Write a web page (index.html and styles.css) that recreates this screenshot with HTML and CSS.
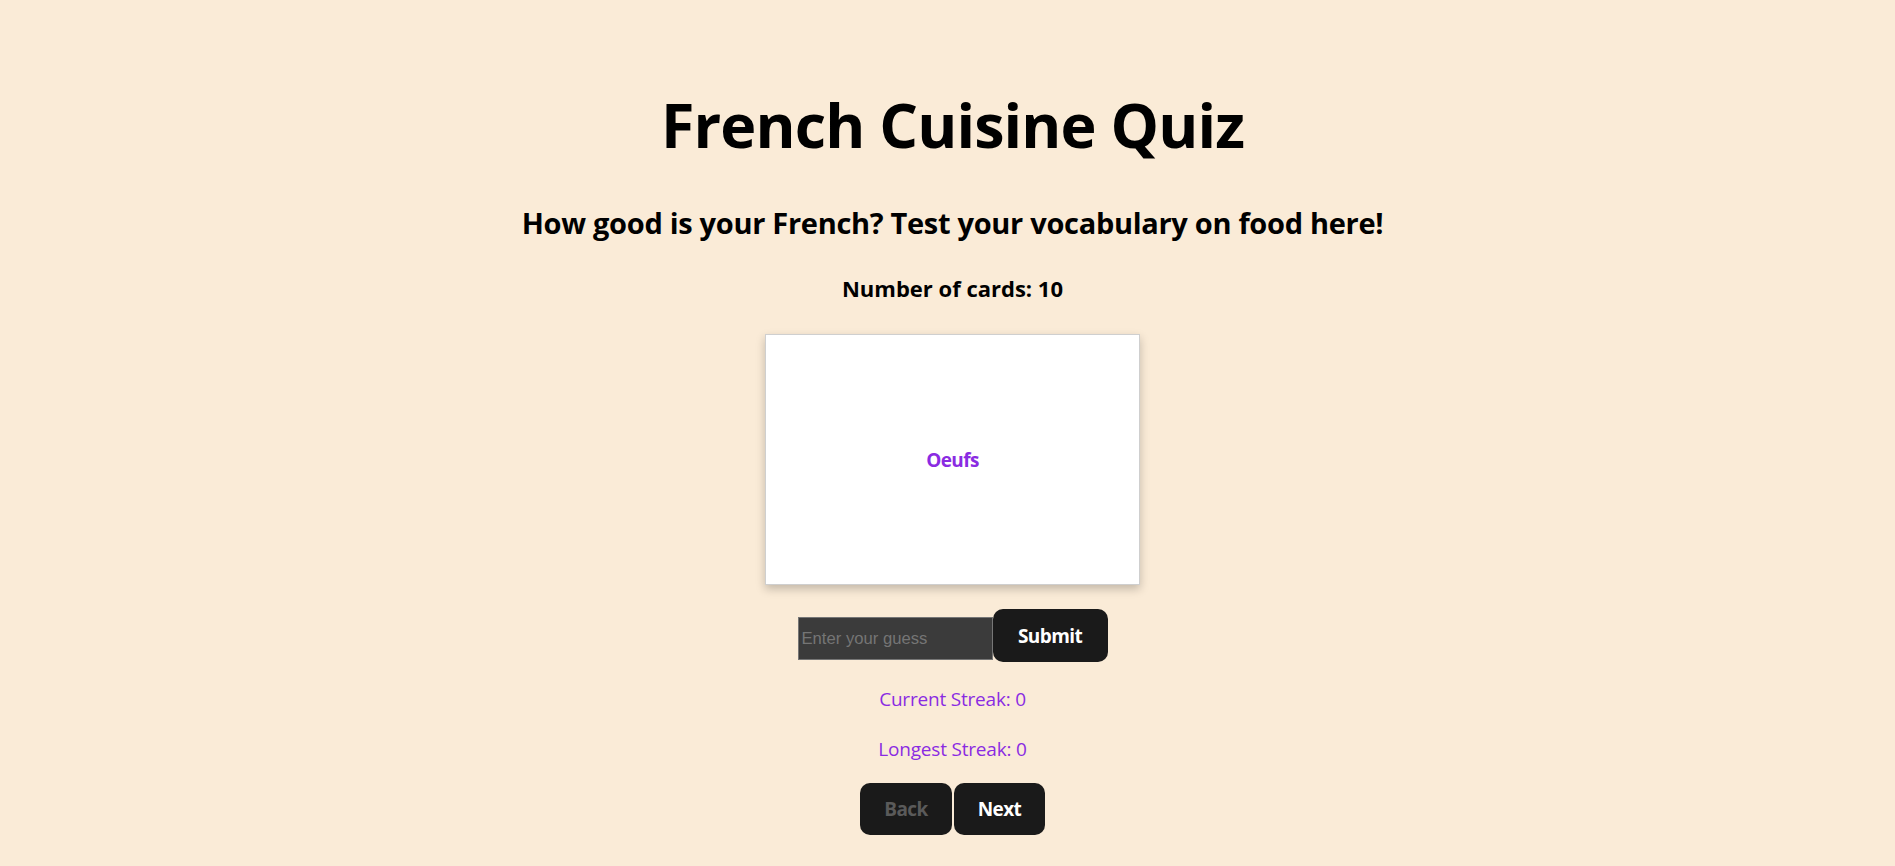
FILE: index.html
```html
<!DOCTYPE html>
<html lang="en">
<head>
<meta charset="utf-8">
<title>French Cuisine Quiz</title>
<link rel="stylesheet" href="styles.css">
</head>
<body>
<div class="app">
  <h1 class="title">French Cuisine Quiz</h1>
  <h2 class="subtitle">How good is your French? Test your vocabulary on food here!</h2>
  <h3 class="count">Number of cards: 10</h3>
  <div class="card"><span class="card-text">Oeufs</span></div>
  <div class="guess-row">
    <input class="guess-input" type="text" placeholder="Enter your guess">
    <button class="btn btn-submit">Submit</button>
  </div>
  <p class="streak">Current Streak: 0</p>
  <p class="streak">Longest Streak: 0</p>
  <div class="nav-row">
    <button class="btn btn-nav btn-back" disabled>Back</button>
    <button class="btn btn-nav btn-next">Next</button>
  </div>
</div>
</body>
</html>
```
FILE: styles.css
```css
html, body {
  margin: 0;
  padding: 0;
}
body {
  background: #faebd7;
  font-family: "Open Sans", "Noto Sans", sans-serif;
  color: #000;
}
.app {
  display: flex;
  flex-direction: column;
  align-items: center;
  padding: 0 0 0 10px;
  text-align: center;
}
.title {
  font-size: 61px;
  font-weight: 700;
  letter-spacing: -0.9px;
  line-height: 1.1;
  margin: 91px 0 0;
}
.subtitle {
  font-size: 29px;
  font-weight: 700;
  letter-spacing: -0.3px;
  line-height: normal;
  margin: 45px 0 0;
}
.count {
  font-size: 22px;
  font-weight: 700;
  line-height: normal;
  margin: 31px 0 0;
}
.card {
  box-sizing: border-box;
  width: 375px;
  height: 251px;
  margin-top: 31px;
  background: #fff;
  border: 1px solid #cfcfcf;
  box-shadow: 0 4px 9px rgba(0, 0, 0, 0.22);
  display: flex;
  align-items: center;
  justify-content: center;
}
.card-text {
  color: #8a2be2;
  font-weight: 700;
  font-size: 19px;
  letter-spacing: -0.6px;
}
.guess-row {
  display: flex;
  align-items: flex-start;
  margin-top: 24px;
}
.guess-input {
  box-sizing: border-box;
  width: 195px;
  height: 43px;
  margin-top: 8px;
  background: #3b3b3b;
  border: 1px solid #767676;
  padding: 1px 3px;
  font-family: "Liberation Sans", Arial, sans-serif;
  font-size: 16.67px;
  color: #ddd;
}
.guess-input::placeholder {
  color: #757575;
}
.btn {
  box-sizing: border-box;
  height: 53px;
  border-radius: 10px;
  border: 1px solid transparent;
  background: #1a1a1a;
  color: #fff;
  font-family: "Open Sans", "Noto Sans", sans-serif;
  font-size: 19px;
  font-weight: 700;
  letter-spacing: -0.6px;
  padding: 0;
}
.btn:disabled {
  color: #5a5a5a;
}
.btn-submit {
  width: 115px;
}
.btn-nav {
  height: 52px;
}
.btn-back {
  width: 92px;
}
.btn-next {
  width: 91px;
}
.nav-row {
  display: flex;
  gap: 2px;
  margin-top: 19px;
}
.streak {
  color: #8a2be2;
  font-size: 19px;
  letter-spacing: -0.2px;
  line-height: 30px;
  margin: 22px 0 0;
}
.streak + .streak {
  margin-top: 20px;
}
```
